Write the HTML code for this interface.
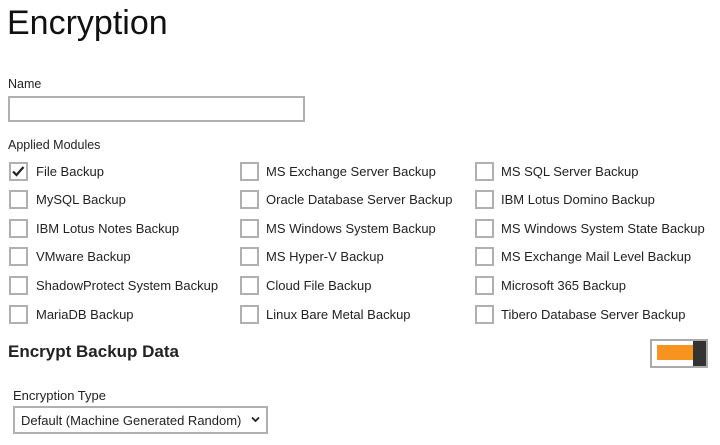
<!DOCTYPE html>
<html><head><style>
body{margin:0;width:720px;height:445px;background:#fff;font-family:"Liberation Sans",Arial,sans-serif;color:#222;position:relative;overflow:hidden}
.a{position:absolute;white-space:nowrap}
.cb{position:absolute;width:15px;height:15px;border:2px solid #b0b0b0;background:#fff}
.t{position:absolute;font-size:13px;line-height:16px;white-space:nowrap;color:#222}
</style></head><body>
<div class="a" style="left:7px;top:3px;font-size:34px;line-height:40px;color:#111">Encryption</div>
<div class="a" style="left:8px;top:77px;font-size:12.5px;line-height:15px">Name</div>
<div class="a" style="left:8px;top:96px;width:293px;height:22px;border:2px solid #b0b0b0"></div>
<div class="a" style="left:8px;top:138px;font-size:12.5px;line-height:15px">Applied Modules</div>

<div class="cb" style="left:9px;top:162px"></div>
<svg class="a" style="left:11px;top:164px" width="15" height="15" viewBox="0 0 15 15"><path d="M2 7.5 L5.5 11 L12.5 3" fill="none" stroke="#222" stroke-width="2.2"/></svg>
<div class="t" style="left:36px;top:164px">File Backup</div>
<div class="cb" style="left:9px;top:190px"></div><div class="t" style="left:36px;top:192px">MySQL Backup</div>
<div class="cb" style="left:9px;top:219px"></div><div class="t" style="left:36px;top:221px">IBM Lotus Notes Backup</div>
<div class="cb" style="left:9px;top:247px"></div><div class="t" style="left:36px;top:249px">VMware Backup</div>
<div class="cb" style="left:9px;top:276px"></div><div class="t" style="left:36px;top:278px">ShadowProtect System Backup</div>
<div class="cb" style="left:9px;top:305px"></div><div class="t" style="left:36px;top:307px">MariaDB Backup</div>

<div class="cb" style="left:240px;top:162px"></div><div class="t" style="left:266px;top:164px">MS Exchange Server Backup</div>
<div class="cb" style="left:240px;top:190px"></div><div class="t" style="left:266px;top:192px">Oracle Database Server Backup</div>
<div class="cb" style="left:240px;top:219px"></div><div class="t" style="left:266px;top:221px">MS Windows System Backup</div>
<div class="cb" style="left:240px;top:247px"></div><div class="t" style="left:266px;top:249px">MS Hyper-V Backup</div>
<div class="cb" style="left:240px;top:276px"></div><div class="t" style="left:266px;top:278px">Cloud File Backup</div>
<div class="cb" style="left:240px;top:305px"></div><div class="t" style="left:266px;top:307px">Linux Bare Metal Backup</div>

<div class="cb" style="left:475px;top:162px"></div><div class="t" style="left:501px;top:164px">MS SQL Server Backup</div>
<div class="cb" style="left:475px;top:190px"></div><div class="t" style="left:501px;top:192px">IBM Lotus Domino Backup</div>
<div class="cb" style="left:475px;top:219px"></div><div class="t" style="left:501px;top:221px">MS Windows System State Backup</div>
<div class="cb" style="left:475px;top:247px"></div><div class="t" style="left:501px;top:249px">MS Exchange Mail Level Backup</div>
<div class="cb" style="left:475px;top:276px"></div><div class="t" style="left:501px;top:278px">Microsoft 365 Backup</div>
<div class="cb" style="left:475px;top:305px"></div><div class="t" style="left:501px;top:307px">Tibero Database Server Backup</div>

<div class="a" style="left:8px;top:342px;font-size:17px;line-height:20px;font-weight:bold;color:#222">Encrypt Backup Data</div>
<div class="a" style="left:650px;top:339px;width:54px;height:25px;border:2px solid #aaa;background:#fff"></div>
<div class="a" style="left:657px;top:345px;width:37px;height:15px;background:#f7931e"></div>
<div class="a" style="left:693px;top:341px;width:13px;height:25px;background:#333"></div>

<div class="a" style="left:13px;top:388px;font-size:13px;line-height:15px">Encryption Type</div>
<div class="a" style="left:13px;top:406px;width:251px;height:24px;border:2px solid #b0b0b0"></div>
<div class="a" style="left:21px;top:413px;font-size:13px;line-height:16px">Default (Machine Generated Random)</div>
<svg class="a" style="left:251px;top:416px" width="9" height="7" viewBox="0 0 9 7"><path d="M1 1.5 L4.5 5 L8 1.5" fill="none" stroke="#222" stroke-width="1.8"/></svg>
</body></html>
